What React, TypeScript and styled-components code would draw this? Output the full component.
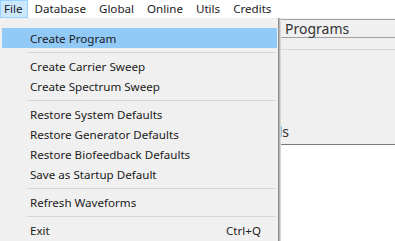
import React from 'react'
import styled, { createGlobalStyle } from 'styled-components'

const Global = createGlobalStyle`
  html, body { margin: 0; padding: 0; background: #ffffff; }
  body { font-family: "Noto Sans", "Liberation Sans", sans-serif; }
`

const Screen = styled.div`
  position: relative;
  width: 395px;
  height: 241px;
  overflow: hidden;
  background: #ffffff;
  display: flex;
  flex-direction: column;
  color: #1b1b1b;
`

const MenuBar = styled.div`
  height: 18px;
  display: flex;
  align-items: stretch;
  background: #ffffff;
  font-size: 11.6px;
  line-height: 18px;
`

const BarItem = styled.div<{ $open?: boolean }>`
  padding: 0 ${p => (p.$open ? '5px' : '6px')} 0 ${p => (p.$open ? '4px' : '7px')};
  background: ${p => (p.$open ? '#cce8ff' : 'transparent')};
  box-shadow: ${p => (p.$open ? 'inset 0 0 0 1px #99d1ff' : 'none')};
`

const Main = styled.div`
  flex: 1;
  display: flex;
  flex-direction: column;
  background: #f0f0f0;
`

const HeaderRow = styled.div`
  margin-top: 1px;
  height: 17px;
  border-top: 1px solid #a0a0a0;
  border-bottom: 1px solid #a0a0a0;
  display: flex;
  align-items: center;
  padding-left: 285px;
  font-size: 14px;
  color: #333;
`

const SubRow = styled.div`
  height: 11px;
  border-bottom: 1px solid #d8d8d8;
`

const Body = styled.div`
  height: 94px;
  border-bottom: 1px solid #7a7a7a;
  display: flex;
  align-items: flex-end;
`

const Label = styled.div`
  width: 289px;
  text-align: right;
  font-size: 14px;
  color: #333;
  padding-bottom: 3px;
`

const WhiteArea = styled.div`
  flex: 1;
  background: #ffffff;
`

const Dropdown = styled.div`
  position: absolute;
  left: 0;
  top: 18px;
  width: 279px;
  height: 240px;
  padding-top: 10px;
  background: #f0f0f0;
  border-right: 1px solid #8e8e8e;
  box-shadow: 1px 0 0 #b4b4b4, 2px 0 0 #d6d6d6;
  font-size: 11.6px;
  box-sizing: border-box;
`

const Item = styled.div<{ $active?: boolean }>`
  height: 20px;
  margin: 0 1px 0 2px;
  display: flex;
  align-items: center;
  justify-content: space-between;
  padding: 0 16px 0 28px;
  background: ${p => (p.$active ? '#91c9f7' : 'transparent')};
`

const Separator = styled.div`
  height: 1px;
  margin: 4px 2px 3px 27px;
  background: #d7d7d7;
`

type Entry = { label: string; key?: string } | 'sep'

const entries: Entry[] = [
  { label: 'Create Program' },
  'sep',
  { label: 'Create Carrier Sweep' },
  { label: 'Create Spectrum Sweep' },
  'sep',
  { label: 'Restore System Defaults' },
  { label: 'Restore Generator Defaults' },
  { label: 'Restore Biofeedback Defaults' },
  { label: 'Save as Startup Default' },
  'sep',
  { label: 'Refresh Waveforms' },
  'sep',
  { label: 'Exit', key: 'Ctrl+Q' },
]

export default function App() {
  return (
    <Screen>
      <Global />
      <MenuBar>
        <BarItem $open>File</BarItem>
        <BarItem>Database</BarItem>
        <BarItem>Global</BarItem>
        <BarItem>Online</BarItem>
        <BarItem>Utils</BarItem>
        <BarItem>Credits</BarItem>
      </MenuBar>
      <Main>
        <HeaderRow>Programs</HeaderRow>
        <SubRow />
        <Body>
          <Label>Controls</Label>
        </Body>
        <WhiteArea />
      </Main>
      <Dropdown>
        {entries.map((e, i) =>
          e === 'sep' ? (
            <Separator key={i} />
          ) : (
            <Item key={i} $active={i === 0}>
              <span>{e.label}</span>
              {e.key && <span>{e.key}</span>}
            </Item>
          )
        )}
      </Dropdown>
    </Screen>
  )
}
